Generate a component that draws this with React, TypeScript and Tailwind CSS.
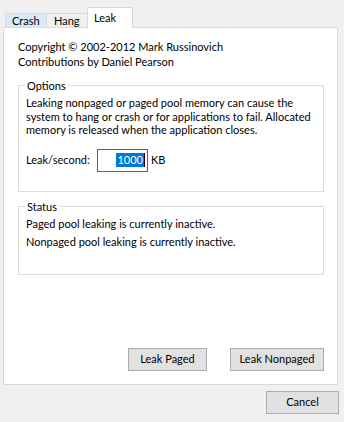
const font = { fontFamily: 'Lato, "Noto Sans", sans-serif' };

function GroupBox({ label, className, children }: { label: string; className: string; children: React.ReactNode }) {
  return (
    <div className={`relative w-[306px] border border-[#dcdcdc] ${className}`}>
      <span className="absolute left-[6px] top-[-8px] bg-white px-[2px] leading-[15px]">{label}</span>
      {children}
    </div>
  );
}

function Button({ children, className }: { children: React.ReactNode; className: string }) {
  return (
    <button className={`flex h-[23px] items-center justify-center border border-[#adadad] bg-[#e1e1e1] text-black ${className}`}>
      {children}
    </button>
  );
}

export default function App() {
  return (
    <div className="flex h-[422px] w-[344px] flex-col bg-[#f0f0f0] text-[11px] text-black" style={font}>
      {/* tab strip */}
      <div className="flex h-[27px] items-end pl-[5px]">
        <div className="flex h-[14px] w-[41px] items-center border-t border-l border-[#d9d9d9] bg-[#d8eaf9] pl-[6px] leading-[14px]">
          Crash
        </div>
        <div className="flex h-[14px] w-[41px] items-center border-t border-l border-[#d9d9d9] bg-[#f0f0f0] pl-[7px] leading-[14px]">
          Hang
        </div>
        <div className="relative z-10 mb-[-1px] flex h-[21px] w-[46px] items-start border-x border-t border-[#d9d9d9] bg-white pl-[6px] pt-[2px] leading-[15px]">
          Leak
        </div>
      </div>

      {/* tab page */}
      <div className="ml-[3px] flex h-[358px] w-[335px] flex-col border border-[#d9d9d9] bg-white pl-[14px] pt-[11px] pb-[13px]">
        <div className="leading-[15px]">
          <div>Copyright © 2002-2012 Mark Russinovich</div>
          <div>Contributions by Daniel Pearson</div>
        </div>

        <GroupBox label="Options" className="mt-[16px] h-[107px]">
          <p className="whitespace-nowrap pl-[7px] pt-[10px] leading-[13.5px]">
            Leaking nonpaged or paged pool memory can cause the
            <br />
            system to hang or crash or for applications to fail. Allocated
            <br />
            memory is released when the application closes.
          </p>
          <div className="mt-[12px] flex items-center pl-[7px]">
            <span className="w-[71px]">Leak/second:</span>
            <div className="flex h-[23px] w-[51px] items-center justify-end border border-[#0078d7] pr-[2px]">
              <span className="bg-[#0078d7] px-[1px] leading-[14px] text-white">1000</span>
              <span className="h-[14px] w-[1px] bg-black" />
            </div>
            <span className="ml-[3px]">KB</span>
          </div>
        </GroupBox>

        <GroupBox label="Status" className="mt-[14px] h-[69px]">
          <div className="pl-[7px] pt-[8px] leading-[17.5px]">
            <div>Paged pool leaking is currently inactive.</div>
            <div>Nonpaged pool leaking is currently inactive.</div>
          </div>
        </GroupBox>

        <div className="mt-auto flex w-[306px] justify-end gap-[23px]">
          <Button className="w-[79px]">Leak Paged</Button>
          <Button className="w-[94px]">Leak Nonpaged</Button>
        </div>
      </div>

      <div className="mt-[6px] flex justify-end pr-[5px]">
        <Button className="w-[73px]">Cancel</Button>
      </div>
    </div>
  );
}
